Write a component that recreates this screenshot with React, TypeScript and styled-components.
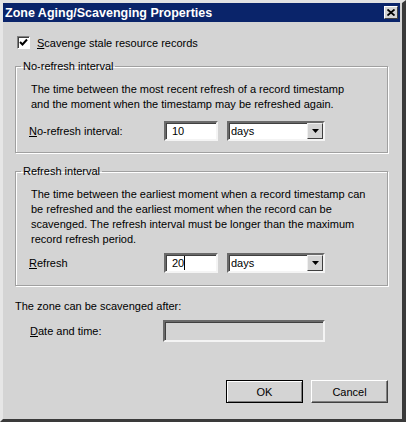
import styled, { createGlobalStyle } from "styled-components";

const GlobalStyle = createGlobalStyle`
  html, body {
    margin: 0;
    padding: 0;
    background: #d4d4d4;
  }
  body {
    font-family: "Liberation Sans", Arial, sans-serif;
    font-size: 11px;
    color: #000;
  }
`;

const Window = styled.div`
  width: 406px;
  height: 422px;
  box-sizing: border-box;
  display: flex;
  flex-direction: column;
  background: #d4d4d4;
  border-top: 3px solid #e2e2e2;
  border-left: 3px solid #e6e6e6;
  border-right: 4px solid #3a3a3a;
  border-bottom: 3px solid #3a3a3a;
`;

const TitleBar = styled.div`
  height: 19px;
  margin-right: 2px;
  display: flex;
  align-items: center;
  justify-content: space-between;
  padding: 0 2px 0 2px;
  background: #0a246a;
  color: #fff;
  font-weight: bold;
  font-size: 12.5px;
`;

const CloseButton = styled.div`
  width: 14px;
  height: 13px;
  box-sizing: border-box;
  display: flex;
  align-items: center;
  justify-content: center;
  background: #d4d4d4;
  border: 1px solid;
  border-color: #fff #404040 #404040 #fff;
`;

const Body = styled.div`
  flex: 1;
  display: flex;
  flex-direction: column;
  padding: 14px 14px 0 12px;
`;

const CheckRow = styled.label`
  display: flex;
  align-items: center;
  gap: 7px;
  padding-left: 2px;
  height: 13px;
`;

const CheckBox = styled.span`
  width: 13px;
  height: 13px;
  box-sizing: border-box;
  display: flex;
  align-items: center;
  justify-content: center;
  background: #fff;
  border: 1px solid;
  border-color: #808080 #fff #fff #808080;
  box-shadow: inset 1px 1px #404040;
`;

const Key = styled.span`
  text-decoration: underline;
`;

const Group = styled.fieldset<{ $top: number; $bottom: number }>`
  margin: ${({ $top }) => $top}px 0 0 0;
  padding: 9px 13px ${({ $bottom }) => $bottom}px 13px;
  border: 1px solid #a0a0a0;
  box-shadow: inset 1px 1px #fff, 1px 1px #fff;
  min-width: 0;
`;

const Legend = styled.legend`
  margin-left: -8px;
  padding: 0 2px;
  line-height: 14px;
`;

const Desc = styled.p`
  margin: 0 0 0 2px;
  line-height: 15px;
  white-space: nowrap;
`;

const FieldRow = styled.div<{ $top: number }>`
  display: flex;
  align-items: center;
  margin-top: ${({ $top }) => $top}px;
`;

const FieldLabel = styled.span<{ $width: number }>`
  width: ${({ $width }) => $width}px;
`;

const Sunken = styled.div`
  height: 20px;
  box-sizing: border-box;
  border: 2px solid;
  border-color: #6a6a6a #f4f4f4 #f4f4f4 #6a6a6a;
  box-shadow: inset 1px 1px #404040;
  display: flex;
  align-items: center;
`;

const TextBox = styled(Sunken)`
  width: 54px;
  background: #fff;
  padding-left: 6px;
`;

const Caret = styled.span`
  width: 1px;
  height: 14px;
  background: #000;
`;

const Select = styled(Sunken)`
  width: 98px;
  margin-left: 9px;
  background: #fff;
  padding-left: 2px;
  justify-content: space-between;
`;

const DropButton = styled.span`
  width: 16px;
  height: 16px;
  box-sizing: border-box;
  display: flex;
  align-items: center;
  justify-content: center;
  background: #d4d4d4;
  border: 1px solid;
  border-color: #f0f0f0 #404040 #404040 #f0f0f0;
`;

const Note = styled.div`
  margin-top: 13px;
  line-height: 15px;
`;

const DateRow = styled.div`
  display: flex;
  align-items: center;
  margin-top: 6px;
  padding-left: 15px;
`;

const DisabledBox = styled(Sunken)`
  width: 162px;
  height: 22px;
  background: #d4d4d4;
`;

const Buttons = styled.div`
  margin-top: auto;
  margin-bottom: 16px;
  display: flex;
  justify-content: flex-end;
  gap: 8px;
`;

const Button = styled.button<{ $default?: boolean }>`
  width: 77px;
  height: 23px;
  font: inherit;
  color: #000;
  background: #d4d4d4;
  border: 1px solid;
  border-color: ${({ $default }) =>
    $default ? "#000" : "#fff #404040 #404040 #fff"};
  box-shadow: ${({ $default }) =>
    $default
      ? "inset 1px 1px #fff, inset -1px -1px #808080"
      : "inset -1px -1px #808080"};
`;

const Arrow = () => (
  <DropButton>
    <svg width="7" height="4" viewBox="0 0 7 4">
      <path d="M0 0h7L3.5 4z" fill="#000" />
    </svg>
  </DropButton>
);

const App = () => (
  <Window>
    <GlobalStyle />
    <TitleBar>
      <span>Zone Aging/Scavenging Properties</span>
      <CloseButton>
        <svg width="8" height="7" viewBox="0 0 8 7">
          <path d="M0.5 0.5L7.5 6.5M7.5 0.5L0.5 6.5" stroke="#000" strokeWidth="1.8" />
        </svg>
      </CloseButton>
    </TitleBar>
    <Body>
      <CheckRow>
        <CheckBox>
          <svg width="9" height="9" viewBox="0 0 9 9">
            <path d="M1 4l2.5 2.5L8 1.5" fill="none" stroke="#000" strokeWidth="2" />
          </svg>
        </CheckBox>
        <span>
          <Key>S</Key>cavenge stale resource records
        </span>
      </CheckRow>

      <Group $top={10} $bottom={11}>
        <Legend>No-refresh interval</Legend>
        <Desc>
          The time between the most recent refresh of a record timestamp
          <br />
          and the moment when the timestamp may be refreshed again.
        </Desc>
        <FieldRow $top={9}>
          <FieldLabel $width={135}>
            <Key>N</Key>o-refresh interval:
          </FieldLabel>
          <TextBox>10</TextBox>
          <Select>
            <span>days</span>
            <Arrow />
          </Select>
        </FieldRow>
      </Group>

      <Group $top={11} $bottom={12}>
        <Legend>Refresh interval</Legend>
        <Desc>
          The time between the earliest moment when a record timestamp can
          <br />
          be refreshed and the earliest moment when the record can be
          <br />
          scavenged. The refresh interval must be longer than the maximum
          <br />
          record refresh period.
        </Desc>
        <FieldRow $top={6}>
          <FieldLabel $width={135}>
            <Key>R</Key>efresh
          </FieldLabel>
          <TextBox>
            20
            <Caret />
          </TextBox>
          <Select>
            <span>days</span>
            <Arrow />
          </Select>
        </FieldRow>
      </Group>

      <Note>The zone can be scavenged after:</Note>
      <DateRow>
        <FieldLabel $width={133}>
          <Key>D</Key>ate and time:
        </FieldLabel>
        <DisabledBox />
      </DateRow>

      <Buttons>
        <Button $default>OK</Button>
        <Button>Cancel</Button>
      </Buttons>
    </Body>
  </Window>
);

export default App;
